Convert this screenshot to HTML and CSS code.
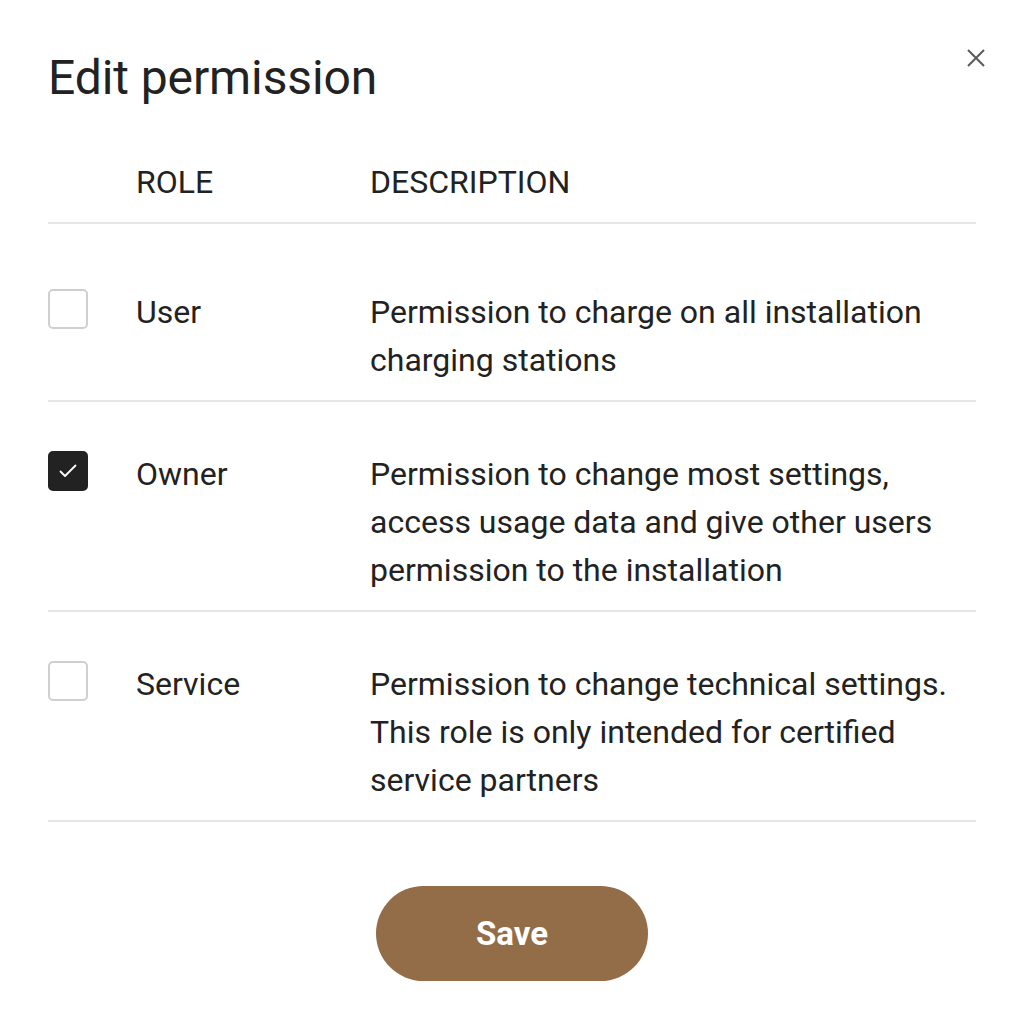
FILE: index.html
```html
<!DOCTYPE html>
<html lang="en">
<head>
<meta charset="utf-8">
<title>Edit permission</title>
<link rel="stylesheet" href="styles.css">
</head>
<body>
<div class="dialog">
  <div class="dialog-head">
    <h1 class="title">Edit permission</h1>
    <button class="close" aria-label="Close">
      <svg width="18" height="18" viewBox="0 0 18 18"><path d="M1 1L17 17M17 1L1 17" stroke="#5a5a5a" stroke-width="2" fill="none"/></svg>
    </button>
  </div>
  <div class="table">
    <div class="row head">
      <div class="cell"></div>
      <div class="cell">ROLE</div>
      <div class="cell">DESCRIPTION</div>
    </div>
    <div class="row first">
      <div class="cell"><span class="box"></span></div>
      <div class="cell">User</div>
      <div class="cell">Permission to charge on all installation charging stations</div>
    </div>
    <div class="row">
      <div class="cell"><span class="box checked"><svg width="18" height="14" viewBox="0 0 18 14"><path d="M1.5 7.5L6 12L16.5 1.5" stroke="#fff" stroke-width="1.8" fill="none" stroke-linecap="round" stroke-linejoin="round"/></svg></span></div>
      <div class="cell">Owner</div>
      <div class="cell">Permission to change most settings, access usage data and give other users permission to the installation</div>
    </div>
    <div class="row">
      <div class="cell"><span class="box"></span></div>
      <div class="cell">Service</div>
      <div class="cell">Permission to change technical settings. This role is only intended for certified service partners</div>
    </div>
  </div>
  <div class="actions">
    <button class="save">Save</button>
  </div>
</div>
</body>
</html>
```
FILE: styles.css
```css
* { box-sizing: border-box; }
html, body { margin: 0; background: #fff; }
body { font-family: Roboto, "Liberation Sans", sans-serif; color: #222; }
.dialog { padding: 50px 48px 49px; width: 1024px; }
.dialog-head { display: flex; justify-content: space-between; align-items: flex-start; }
.title { margin: 0; font-size: 48px; line-height: 56px; font-weight: 400; color: #222; letter-spacing: -0.1px; }
.close { background: none; border: 0; padding: 0; margin: -1px -9px 0 0; width: 18px; height: 18px; display: flex; cursor: pointer; }
.table { margin-top: 52px; }
.row { display: grid; grid-template-columns: 88px 234px 1fr; border-bottom: 2px solid #e5e5ea; padding: 48px 0 16px; font-size: 32px; line-height: 48px; }
.row.head { padding: 0 0 16px; }
.row.first { padding-top: 64px; }
.box { display: flex; align-items: center; justify-content: center; width: 40px; height: 40px; border: 2px solid #cfcfcf; border-radius: 5px; margin-top: 1px; }
.box.checked { background: #222; border-color: #222; }
.actions { display: flex; justify-content: center; margin-top: 64px; }
.save { width: 272px; height: 95px; border-radius: 48px; border: 0; background: #926d48; color: #fff; font-family: Roboto, "Liberation Sans", sans-serif; font-weight: 700; font-size: 33px; cursor: pointer; }
```
